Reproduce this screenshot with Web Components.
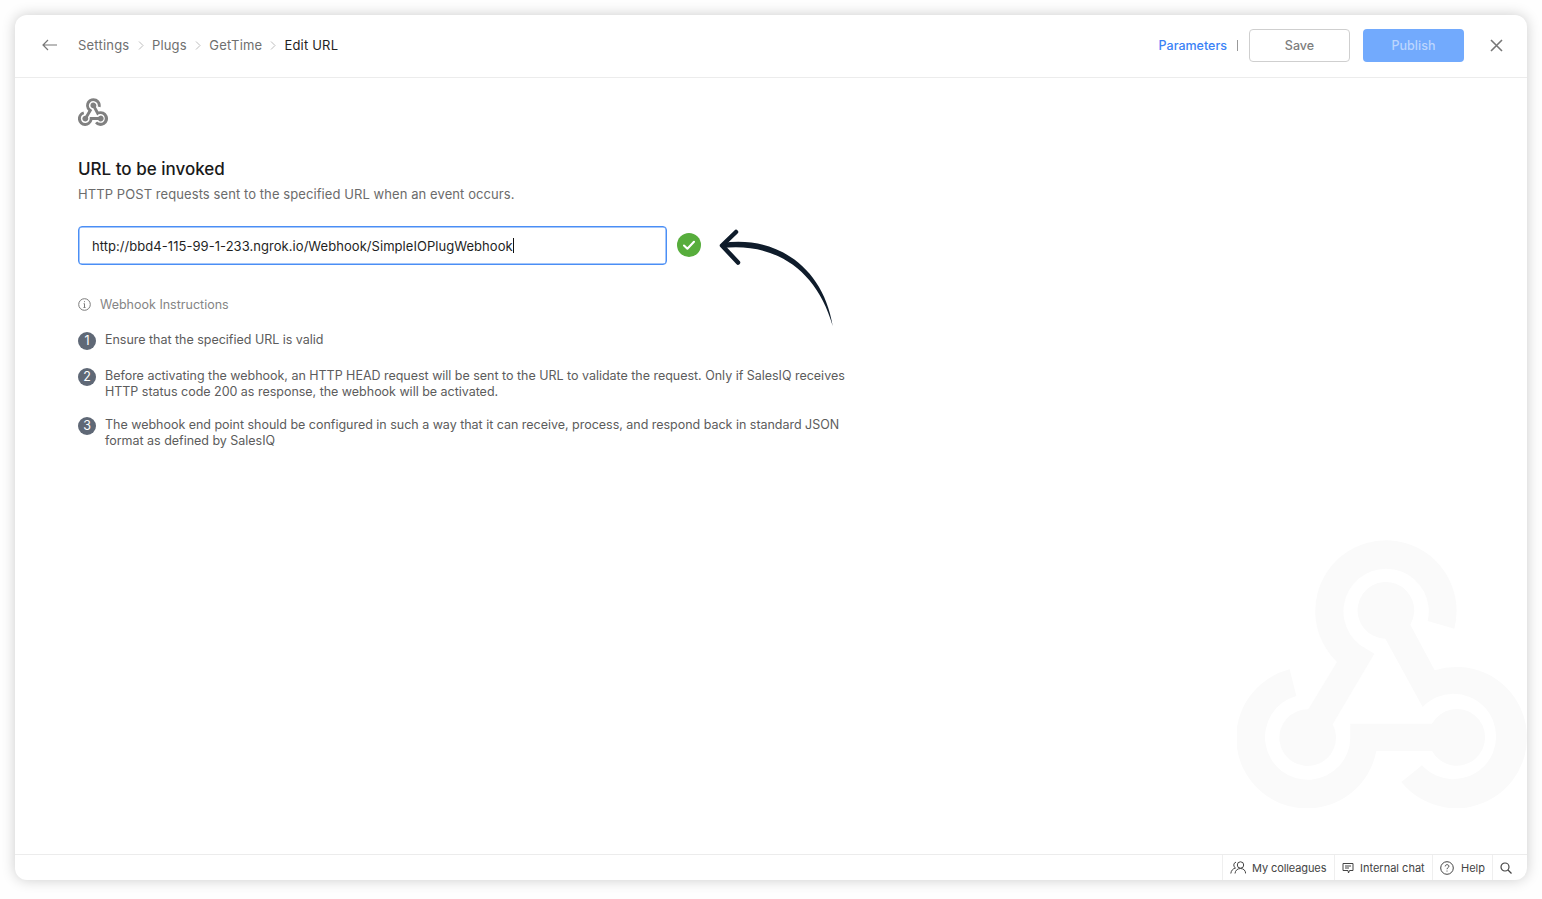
<!DOCTYPE html>
<html>
<head>
<meta charset="utf-8">
<title>Edit URL</title>
<style>
    html, body { margin: 0; height: 100%; background: #fefefe; }
    body { font-family: Inter, "Liberation Sans", sans-serif; overflow: hidden; }
</style>
</head>
<body>
<app-window>
    <top-bar slot="top"></top-bar>
    <url-form></url-form>
    <bottom-bar slot="bottom"></bottom-bar>
</app-window>

<script>
const WEBHOOK_PATHS = `
    <path d="M702 295A212 212 0 1 0 350 395L264 537A85 85 0 1 0 337 582L462 370L420 345A128 128 0 1 1 622 272Z"/>
    <path d="M570 283A85 85 0 1 0 495 325L607 530A128 128 0 1 1 605 705L543 755A212 212 0 1 0 643 420Z"/>
    <path d="M208 417A212 212 0 1 0 468 662L635 662A85 85 0 1 0 635 580L390 580L390 622A128 128 0 1 1 228 497Z"/>`;

class AppWindow extends HTMLElement {
    constructor() {
        super();
        this.attachShadow({ mode: 'open' });
        this.shadowRoot.innerHTML = `
            <style>
                :host {
                    display: flex;
                    flex-direction: column;
                    position: relative;
                    box-sizing: border-box;
                    margin: 15px;
                    height: 865px;
                    background: #fff;
                    border-radius: 12px;
                    box-shadow: 0 0 14px rgba(0,0,0,0.2);
                    overflow: hidden;
                }
                .watermark {
                    position: absolute;
                    left: 1221.7px;
                    top: 524.7px;
                    width: 290px;
                    height: 268.3px;
                    fill: #fafafa;
                }
                .body { flex: 1; position: relative; min-height: 0; }
            </style>
            <slot name="top"></slot>
            <div class="body"><slot></slot></div>
            <slot name="bottom"></slot>
            <svg class="watermark" viewBox="50 29 870 805">${WEBHOOK_PATHS}</svg>
        `;
    }
}

class TopBar extends HTMLElement {
    constructor() {
        super();
        this.attachShadow({ mode: 'open' });
        this.shadowRoot.innerHTML = `
            <style>
                :host {
                    display: flex;
                    align-items: center;
                    box-sizing: border-box;
                    position: relative;
                    z-index: 1;
                    height: 63px;
                    padding: 0 24px 2px 27px;
                    border-bottom: 1px solid #ececec;
                    font-size: 13px;
                    color: #6f6f6f;
                }
                .back { width: 15px; height: 12px; margin-right: 21px; fill: none; stroke: #777; stroke-width: 1.2; }
                .crumb { white-space: nowrap; letter-spacing: .2px; }
                .current { color: #1f1f1f; }
                .sep { width: 6px; height: 9px; margin: 0 8px; fill: none; stroke: #bdbdbd; stroke-width: 1; }
                .sep.wide { margin-left: 8.5px; }
                .spacer { flex: 1; }
                .params { color: #3b82f6; font-weight: 500; font-size: 12.5px; }
                .pipe { width: 1px; height: 11px; background: #999; margin: 0 11px 0 10px; }
                .btn {
                    box-sizing: border-box;
                    width: 101px;
                    height: 33px;
                    display: flex;
                    align-items: center;
                    justify-content: center;
                    border-radius: 4px;
                    font-weight: 500;
                    font-size: 12.5px;
                }
                .save { border: 1px solid #cfcfcf; color: #7d7d7d; margin-right: 13px; }
                .publish { background: #72aafd; color: #bcd6fe; margin-right: 26px; }
                .close { width: 13px; height: 13px; fill: none; stroke: #777; stroke-width: 1.6; }
            </style>
            <svg class="back" viewBox="0 0 15 12"><path d="M15 6H1M6 1L1 6l5 5"/></svg>
            <span class="crumb">Settings</span>
            <svg class="sep wide" viewBox="0 0 6 9"><path d="M1 .5l4 4-4 4"/></svg>
            <span class="crumb">Plugs</span>
            <svg class="sep wide" viewBox="0 0 6 9"><path d="M1 .5l4 4-4 4"/></svg>
            <span class="crumb">GetTime</span>
            <svg class="sep" viewBox="0 0 6 9"><path d="M1 .5l4 4-4 4"/></svg>
            <span class="crumb current">Edit URL</span>
            <span class="spacer"></span>
            <span class="params">Parameters</span>
            <span class="pipe"></span>
            <span class="btn save">Save</span>
            <span class="btn publish">Publish</span>
            <svg class="close" viewBox="0 0 13 13"><path d="M1 1l11 11M12 1L1 12"/></svg>
        `;
    }
}

class UrlField extends HTMLElement {
    constructor() {
        super();
        this.attachShadow({ mode: 'open' });
        this.shadowRoot.innerHTML = `
            <style>
                :host { display: flex; align-items: center; gap: 10px; }
                .box {
                    box-sizing: border-box;
                    width: 589px;
                    height: 39px;
                    display: flex;
                    align-items: center;
                    padding: 0 13px;
                    border: 1px solid #4a8ef5;
                    box-shadow: inset 0 0 0 .5px #4a8ef5;
                    border-radius: 4px;
                    font-size: 13px;
                    letter-spacing: .05px;
                    color: #1f1f1f;
                    white-space: nowrap;
                }
                .caret { width: 1px; height: 15px; background: #111; }
                .ok { width: 24px; height: 24px; margin-bottom: 1px; }
            </style>
            <div class="box"><slot></slot><span class="caret"></span></div>
            <svg class="ok" viewBox="0 0 24 24">
                <circle cx="12" cy="12" r="12" fill="#57ad3c"/>
                <path d="M7 12.500l3.400 3.200L17 8.800" fill="none" stroke="#fff" stroke-width="2.100" stroke-linecap="round" stroke-linejoin="round"/>
            </svg>
        `;
    }
}

class StepItem extends HTMLElement {
    constructor() {
        super();
        this.attachShadow({ mode: 'open' });
        this.shadowRoot.innerHTML = `
            <style>
                :host { display: flex; align-items: flex-start; gap: 9px; min-height: 19px; }
                .num {
                    flex: none;
                    width: 18px;
                    height: 18px;
                    border-radius: 50%;
                    background: #5f6876;
                    color: #fff;
                    font-size: 12.5px;
                    line-height: 18px;
                    text-align: center;
                }
                .text { font-size: 12.5px; letter-spacing: -.02px; line-height: 16px; color: #5c5c5c; }
            </style>
            <span class="num">${this.getAttribute('n')}</span>
            <span class="text"><slot></slot></span>
        `;
    }
}

class UrlForm extends HTMLElement {
    constructor() {
        super();
        this.attachShadow({ mode: 'open' });
        this.shadowRoot.innerHTML = `
            <style>
                :host {
                    display: block;
                    position: relative;
                    z-index: 1;
                    box-sizing: border-box;
                    padding: 20px 0 0 63px;
                    width: 840px;
                }
                .logo { display: block; width: 30px; height: 28px; fill: #808080; }
                h2 {
                    margin: 32px 0 0;
                    font-size: 17px;
                    line-height: 22px;
                    font-weight: 500;
                    color: #1a1a1a;
                }
                p { margin: 6px 0 0; font-size: 13px; letter-spacing: .08px; line-height: 16px; color: #6b6b6b; }
                url-field { margin-top: 24px; }
                .hint {
                    display: flex;
                    align-items: center;
                    gap: 9px;
                    margin-top: 32px;
                    font-size: 12.5px;
                    line-height: 16px;
                    color: #858585;
                }
                .hint svg { width: 13px; height: 13px; margin-bottom: 2px; fill: none; stroke: #7a7a7a; }
                .steps { display: flex; flex-direction: column; gap: 17px; margin-top: 19px; }
                .arrow { position: absolute; left: 700px; top: 150px; width: 125px; height: 100px; }
            </style>
            <svg class="logo" viewBox="50 29 870 805">${WEBHOOK_PATHS}</svg>
            <h2>URL to be invoked</h2>
            <p>HTTP POST requests sent to the specified URL when an event occurs.</p>
            <url-field>http://bbd4-115-99-1-233.ngrok.io/Webhook/SimpleIOPlugWebhook</url-field>
            <div class="hint">
                <svg viewBox="0 0 13 13"><circle cx="6.500" cy="6.500" r="5.800"/><path d="M6.500 5.700v3.800M5.500 9.500h2M5.600 5.700h1M6.500 3.200v1"/></svg>
                <span>Webhook Instructions</span>
            </div>
            <div class="steps">
                <step-item n="1">Ensure that the specified URL is valid</step-item>
                <step-item n="2">Before activating the webhook, an HTTP HEAD request will be sent to the URL to validate the request. Only if SalesIQ receives HTTP status code 200 as response, the webhook will be activated.</step-item>
                <step-item n="3">The webhook end point should be configured in such a way that it can receive, process, and respond back in standard JSON format as defined by SalesIQ</step-item>
            </div>
            <svg class="arrow" viewBox="700 150 125 100">
                <path d="M707 165C760 157 808 188 817.700 248C802 192 760 164 707 170Z" fill="#0f1c2b"/>
                <path d="M721 154L707 167.500L723 184.500" fill="none" stroke="#0f1c2b" stroke-width="4.500" stroke-linecap="round" stroke-linejoin="round"/>
            </svg>
        `;
    }
}

class BottomBar extends HTMLElement {
    constructor() {
        super();
        this.attachShadow({ mode: 'open' });
        this.shadowRoot.innerHTML = `
            <style>
                :host {
                    display: flex;
                    justify-content: flex-end;
                    align-items: stretch;
                    box-sizing: border-box;
                    position: relative;
                    z-index: 1;
                    height: 26px;
                    border-top: 1px solid #ececec;
                    font-size: 11px;
                    color: #444;
                }
                .item {
                    display: flex;
                    align-items: center;
                    box-sizing: border-box;
                    gap: 6px;
                    border-left: 1px solid #efefef;
                    padding-left: 7px;
                    white-space: nowrap;
                }
                svg { fill: none; stroke: #444; stroke-width: 1; flex: none; }
            </style>
            <div class="item" style="width:112px">
                <svg width="16" height="13" viewBox="0 0 16 13"><circle cx="10.500" cy="4" r="3.200"/><path d="M5 12.500c.3-3 2.400-5 5.500-5s5 2 5.200 5M6 1.100A3.200 3.200 0 0 0 5.500 7C3 7.500 1.200 9.500 .8 12.500"/></svg>
                <span style="letter-spacing:-.1px">My colleagues</span>
            </div>
            <div class="item" style="width:98px">
                <svg width="12" height="12" viewBox="0 0 12 12"><path d="M1 1.500h10v7H7.500L6.500 11 6 8.500H1zM3 4h6M3 6h4"/></svg>
                <span>Internal chat</span>
            </div>
            <div class="item" style="width:60px;gap:7px">
                <svg width="14" height="14" viewBox="0 0 14 14"><circle cx="7" cy="7" r="6.300"/><path d="M5.200 5.400c0-1 .8-1.700 1.900-1.700s1.800.7 1.800 1.600c0 1.400-1.900 1.400-1.900 2.900M7 9.600v.9"/></svg>
                <span>Help</span>
            </div>
            <div class="item" style="width:35px">
                <svg width="12" height="12" viewBox="0 0 12 12" style="stroke-width:1.200"><circle cx="5" cy="5" r="4"/><path d="M8 8l3.500 3.500"/></svg>
            </div>
        `;
    }
}

customElements.define('app-window', AppWindow);
customElements.define('top-bar', TopBar);
customElements.define('url-field', UrlField);
customElements.define('step-item', StepItem);
customElements.define('url-form', UrlForm);
customElements.define('bottom-bar', BottomBar);
</script>
</body>
</html>
